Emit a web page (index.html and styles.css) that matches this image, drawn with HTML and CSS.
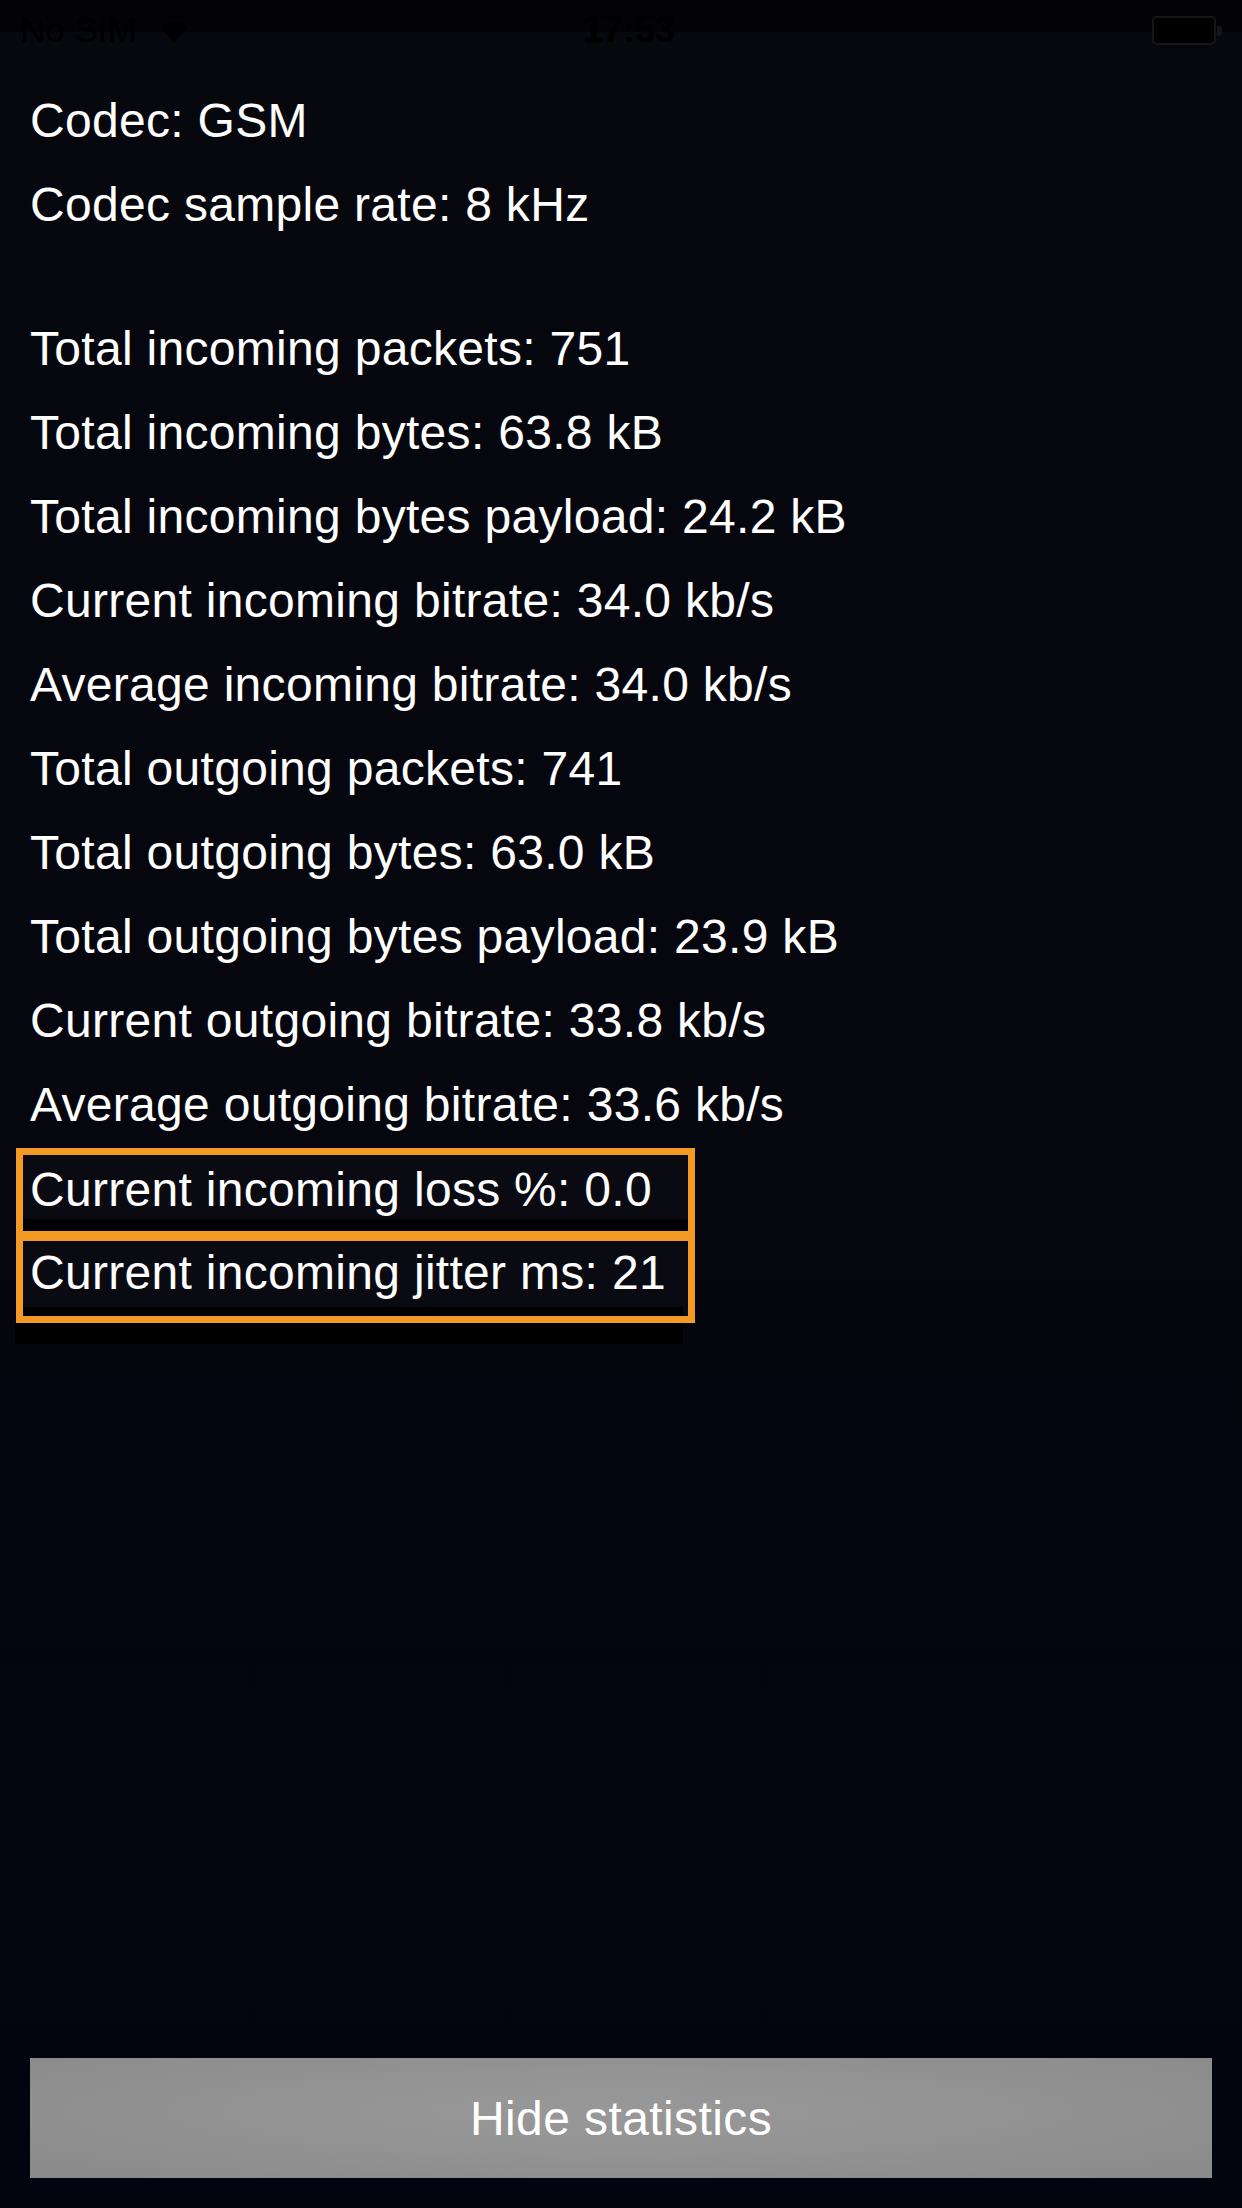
FILE: index.html
```html
<!DOCTYPE html>
<html>
<head>
<meta charset="utf-8">
<link rel="stylesheet" href="styles.css">
</head>
<body>
<div class="screen">
  <div class="statusbar">
    <div class="sb-left">
      <span class="carrier">No SIM</span>
      <svg class="wifi" width="30" height="24" viewBox="0 0 30 24">
        <path d="M15 23 L1.5 8.5 A19 19 0 0 1 28.5 8.5 Z" fill="#000"/>
      </svg>
    </div>
    <div class="sb-time">17:53</div>
    <div class="sb-right">
      <div class="battery"><div class="batt-tip"></div></div>
    </div>
  </div>

  <div class="stats">
    <div class="line">Codec: GSM</div>
    <div class="line">Codec sample rate: 8 kHz</div>
    <div class="gap"></div>
    <div class="line">Total incoming packets: 751</div>
    <div class="line">Total incoming bytes: 63.8 kB</div>
    <div class="line">Total incoming bytes payload: 24.2 kB</div>
    <div class="line">Current incoming bitrate: 34.0 kb/s</div>
    <div class="line">Average incoming bitrate: 34.0 kb/s</div>
    <div class="line">Total outgoing packets: 741</div>
    <div class="line">Total outgoing bytes: 63.0 kB</div>
    <div class="line">Total outgoing bytes payload: 23.9 kB</div>
    <div class="line">Current outgoing bitrate: 33.8 kb/s</div>
    <div class="line">Average outgoing bitrate: 33.6 kb/s</div>
    <div class="hl hl-first">
      <div class="hl-text">Current incoming loss %: 0.0</div>
      <div class="hl-strip"></div>
    </div>
    <div class="hl hl-second">
      <div class="hl-text">Current incoming jitter ms: 21</div>
      <div class="hl-strip"></div>
    </div>
    <div class="under-strip"></div>
  </div>

  <div class="spacer"></div>

  <div class="button">Hide statistics</div>
</div>
</body>
</html>
```

FILE: styles.css
```css
html, body {
  margin: 0;
  padding: 0;
  background: #06060d;
}

.screen {
  width: 1242px;
  height: 2208px;
  display: flex;
  flex-direction: column;
  background: linear-gradient(to bottom, #07070e 0%, #05060e 50%, #02050f 100%);
  font-family: "Liberation Sans", Arial, Helvetica, sans-serif;
  color: #ffffff;
  overflow: hidden;
}

.statusbar {
  height: 60px;
  flex: none;
  display: grid;
  grid-template-columns: 1fr auto 1fr;
  align-items: center;
  padding: 0 18px 0 20px;
  background: linear-gradient(to bottom, #030306 0px, #030306 32px, #07070e 32px);
  color: #000;
  box-sizing: border-box;
}

.sb-left {
  display: flex;
  align-items: center;
  gap: 22px;
}

.carrier {
  font-size: 35px;
  line-height: 60px;
}

.wifi {
  display: block;
  margin-top: 2px;
}

.sb-time {
  font-size: 36px;
  font-weight: 700;
  line-height: 60px;
  padding-left: 14px;
}

.sb-right {
  display: flex;
  justify-content: flex-end;
}

.battery {
  position: relative;
  width: 60px;
  height: 25px;
  border: 2px solid #15151a;
  border-radius: 5px;
  background: #000;
  margin-right: 8px;
  margin-top: 1px;
}

.batt-tip {
  position: absolute;
  right: -8px;
  top: 8px;
  width: 5px;
  height: 10px;
  background: #15151a;
  border-radius: 0 3px 3px 0;
}

.stats {
  padding: 19px 0 0 16px;
  flex: none;
}

.line {
  font-size: 48px;
  line-height: 84px;
  height: 84px;
  padding-left: 14px;
  letter-spacing: 0.3px;
  white-space: nowrap;
}

.gap {
  height: 60px;
}

.hl {
  width: 679px;
  box-sizing: border-box;
  border: 7px solid #f39a24;
  background: #0a0a13;
}

.hl-first {
  margin-top: 1px;
}

.hl-second {
  margin-top: -4px;
}

.hl-text {
  font-size: 48px;
  padding-left: 7px;
  letter-spacing: 0.3px;
  white-space: nowrap;
}

.hl-first .hl-text {
  height: 64px;
  line-height: 69px;
}

.hl-second .hl-text {
  height: 66px;
  line-height: 64px;
}

.hl-strip {
  background: #000;
}

.hl-first .hl-strip {
  height: 12px;
}

.hl-second .hl-strip {
  height: 9px;
  width: 660px;
}

.under-strip {
  height: 21px;
  width: 668px;
  margin-left: -1px;
  background: #000;
}

.spacer {
  flex: 1;
}

.button {
  flex: none;
  margin: 0 30px 30px 30px;
  height: 120px;
  background: radial-gradient(ellipse at 50% 45%, #989898 0%, #939393 45%, #8a8a8a 100%);
  color: #ffffff;
  font-size: 48px;
  letter-spacing: 0.4px;
  display: flex;
  align-items: center;
  justify-content: center;
}
```
